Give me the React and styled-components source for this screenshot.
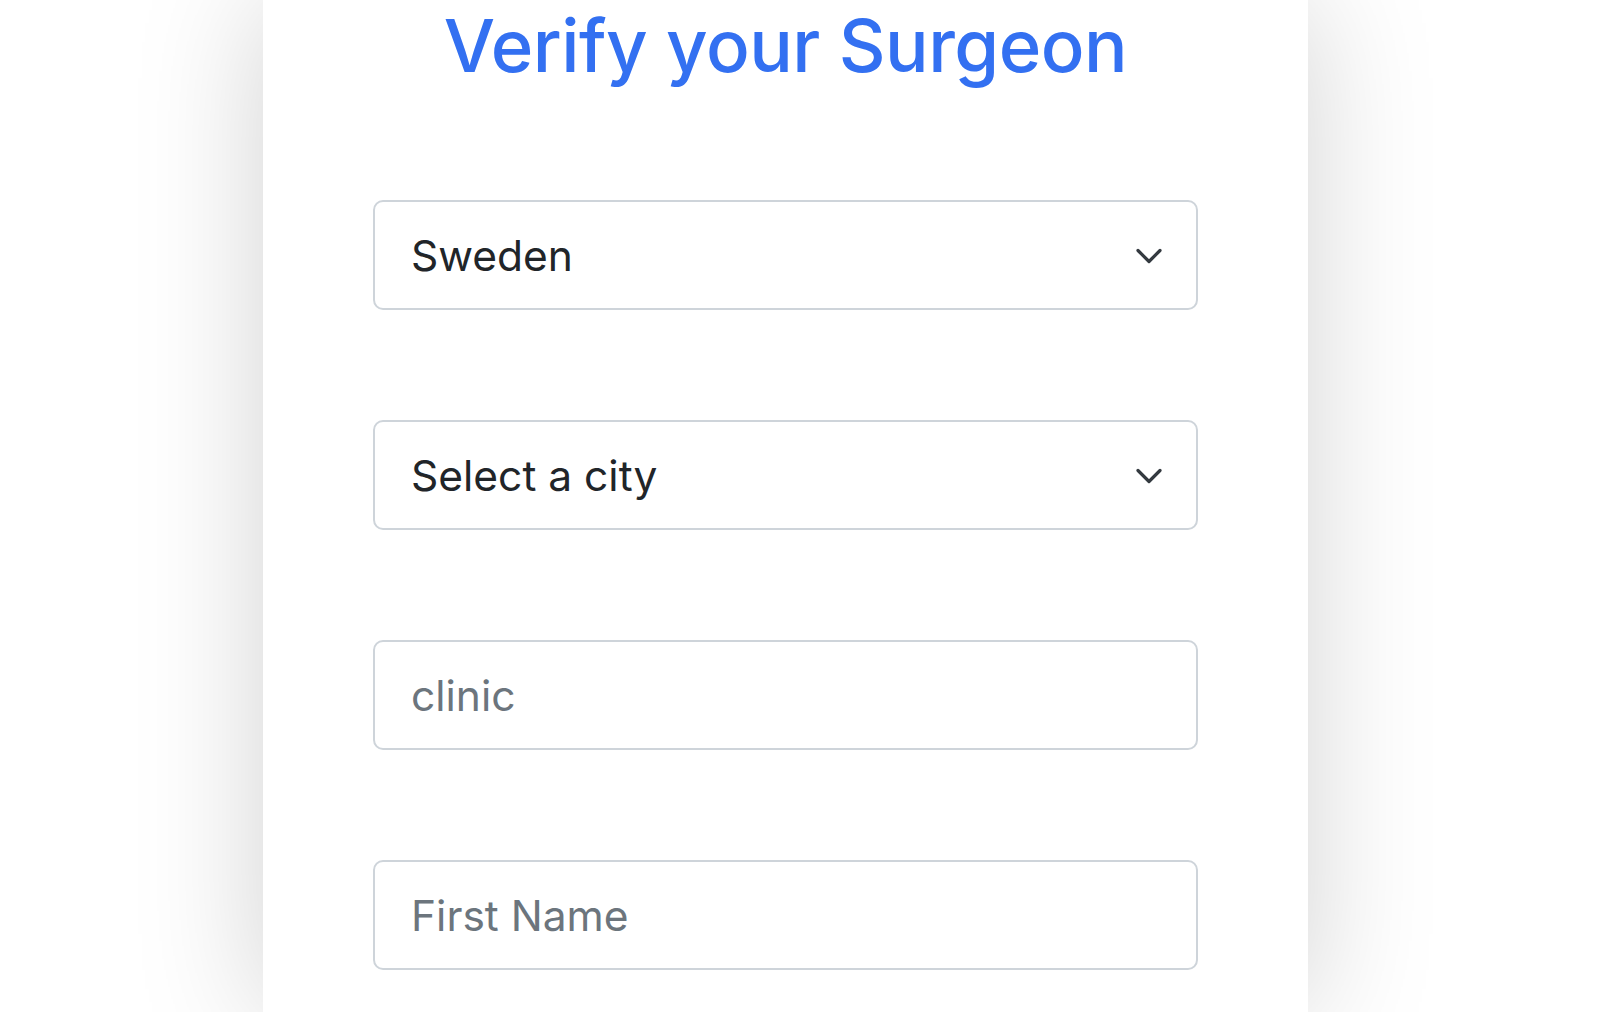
import React from "react";
import styled, { createGlobalStyle } from "styled-components";

const Global = createGlobalStyle`
  html, body { margin: 0; padding: 0; background: #ffffff; }
  body { font-family: Inter, "Noto Sans", "Liberation Sans", sans-serif; overflow: hidden; }
`;

const Page = styled.div`
  display: flex;
  justify-content: flex-start;
  padding-left: 263px;
  min-height: 1012px;
`;

const Card = styled.main`
  width: 1045px;
  min-height: 1012px;
  background: #ffffff;
  box-shadow: 0 0 120px rgba(0, 0, 0, 0.18);
  padding: 0 110px;
  box-sizing: border-box;
  display: flex;
  flex-direction: column;
`;

const Title = styled.h1`
  margin: 0;
  text-align: center;
  color: #3370f1;
  font-weight: 500;
  font-size: 72.5px;
  line-height: 92px;
  letter-spacing: -0.5px;
`;

const Form = styled.form`
  display: flex;
  flex-direction: column;
  gap: 110px;
  margin-top: 108px;
`;

const Field = styled.div`
  height: 110px;
  box-sizing: border-box;
  border: 2px solid #ced4da;
  border-radius: 10px;
  background: #fff;
  display: flex;
  align-items: center;
  justify-content: space-between;
  padding: 0 34px 0 36px;
  font-size: 42.5px;
  color: ${(p) => (p.$placeholder ? "#6c757d" : "#212529")};
`;

const ChevronBox = styled.svg`
  margin-top: 1px;
  flex: none;
`;

const Chevron = () => (
  <ChevronBox width="26" height="16" viewBox="0 0 26 16" fill="none">
    <path d="M2 2.5 L13 13.5 L24 2.5" stroke="#343a40" strokeWidth="3.2" strokeLinecap="round" strokeLinejoin="round" />
  </ChevronBox>
);

export default function App() {
  return (
    <>
      <Global />
      <Page>
        <Card>
          <Title>Verify your Surgeon</Title>
          <Form>
            <Field>
              <span>Sweden</span>
              <Chevron />
            </Field>
            <Field>
              <span>Select a city</span>
              <Chevron />
            </Field>
            <Field $placeholder>
              <span>clinic</span>
            </Field>
            <Field $placeholder>
              <span>First Name</span>
            </Field>
          </Form>
        </Card>
      </Page>
    </>
  );
}
